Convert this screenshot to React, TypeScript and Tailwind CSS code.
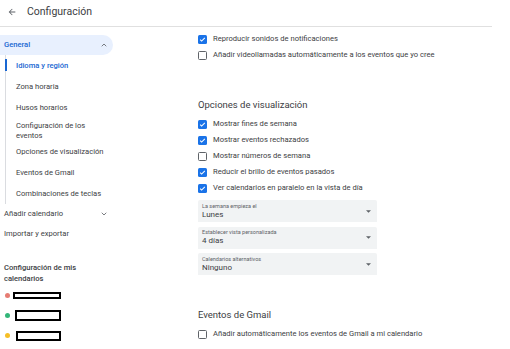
import { ChevronDown, ChevronUp } from "lucide-react";

const navItems = [
  { label: "Zona horaria", h: "h-[21px]" },
  { label: "Husos horarios", h: "h-[20.5px]" },
  { label: "Configuración de los eventos", h: "" },
  { label: "Opciones de visualización", h: "h-[20px]" },
  { label: "Eventos de Gmail", h: "h-[21px]" },
  { label: "Combinaciones de teclas", h: "h-[20.5px]" },
];

function Checkbox({ checked }: { checked: boolean }) {
  if (checked) {
    return (
      <span className="w-[9px] h-[9px] rounded-[1.5px] bg-[#1a73e8] flex items-center justify-center shrink-0">
        <svg width="7" height="7" viewBox="0 0 24 24">
          <path d="M4 12.5l5 5L20 6.5" fill="none" stroke="white" strokeWidth="3.5" />
        </svg>
      </span>
    );
  }
  return <span className="w-[9px] h-[9px] rounded-[1.5px] border-[1.5px] border-[#5f6368] shrink-0" />;
}

function CheckRow({ checked, label }: { checked: boolean; label: string }) {
  return (
    <div className="h-[16px] flex items-center gap-[6px]">
      <Checkbox checked={checked} />
      <span className="text-[7.6px] text-[#3c4043] whitespace-nowrap">{label}</span>
    </div>
  );
}

function SelectBox({ label, value }: { label: string; value: string }) {
  return (
    <div className="w-[179px] h-[22px] bg-[#f1f3f4] rounded-t-[2px] flex items-center justify-between pl-[4px] pr-[6px]">
      <div className="flex flex-col">
        <span className="text-[5.5px] leading-[7px] text-[#5f6368]">{label}</span>
        <span className="text-[8px] leading-[10px] text-[#3c4043]">{value}</span>
      </div>
      <svg width="5" height="3" viewBox="0 0 10 5">
        <path d="M0 0l5 5 5-5z" fill="#5f6368" />
      </svg>
    </div>
  );
}

export default function App() {
  return (
    <div className="w-[510px] h-[349px] overflow-hidden bg-white font-['Roboto',sans-serif] text-[#3c4043]">
      <div className="h-[27px] w-[492px] border-b border-[#e0e0e0] flex items-center pb-[2px]">
        <svg className="ml-[7px]" width="10" height="10" viewBox="0 0 24 24">
          <path d="M20 11H7.8l5.6-5.6L12 4l-8 8 8 8 1.4-1.4L7.8 13H20z" fill="#5f6368" />
        </svg>
        <span className="ml-[10px] text-[10.5px] text-[#3c4043]">Configuración</span>
      </div>

      <div className="flex">
        <aside className="w-[198px] shrink-0 pt-[8px]">
          <div className="w-[113px] h-[20px] bg-[#e8f0fe] rounded-r-full flex items-center justify-between pl-[4px] pr-[5px]">
            <span className="text-[7.6px] font-medium text-[#1967d2]">General</span>
            <ChevronUp size={8} strokeWidth={2.5} color="#5f6368" />
          </div>
          <div className="ml-[5px] border-l border-[#dadce0] w-[108px]">
            <div className="relative h-[21px] flex items-center pl-[10px]">
              <span className="absolute left-[-1.5px] top-[4px] w-[2px] h-[12px] bg-[#1967d2]" />
              <span className="text-[7.6px] font-medium text-[#1967d2]">Idioma y región</span>
            </div>
            {navItems.map((item) =>
              item.label.startsWith("Configuración") ? (
                <div key={item.label} className="pt-[3px] pb-[1.5px] pl-[10px] pr-[20px] text-[7.6px] leading-[10px]">
                  {item.label}
                </div>
              ) : (
                <div key={item.label} className={`${item.h} flex items-center pl-[10px] text-[7.6px]`}>
                  {item.label}
                </div>
              )
            )}
          </div>
          <div className="w-[113px] h-[20px] flex items-center justify-between pl-[4px] pr-[5px] text-[7.6px]">
            <span>Añadir calendario</span>
            <ChevronDown size={8} strokeWidth={2.5} color="#5f6368" />
          </div>
          <div className="h-[20px] flex items-center pl-[4px] text-[7.6px]">Importar y exportar</div>
          <div className="mt-[18px] pl-[4px] w-[90px] text-[7.6px] leading-[11px] font-medium">
            Configuración de mis calendarios
          </div>
          <div className="mt-[2px] flex flex-col">
            <div className="h-[20px] flex items-center">
              <span className="ml-[5px] w-[5px] h-[5px] rounded-full bg-[#e67c73]" />
              <span className="ml-[3px] w-[48px] h-[7px] border-2 border-black" />
            </div>
            <div className="h-[20px] flex items-center">
              <span className="ml-[5px] w-[5px] h-[5px] rounded-full bg-[#33b679]" />
              <span className="ml-[5px] w-[46px] h-[11px] border-2 border-black" />
            </div>
            <div className="h-[20px] flex items-center">
              <span className="ml-[5px] w-[5px] h-[5px] rounded-full bg-[#f6bf26]" />
              <span className="ml-[6px] w-[45px] h-[10px] border-2 border-black" />
            </div>
          </div>
        </aside>

        <main className="pt-[4px]">
          <CheckRow checked label="Reproducir sonidos de notificaciones" />
          <CheckRow checked={false} label="Añadir videollamadas automáticamente a los eventos que yo cree" />

          <h2 className="mt-[35px] h-[14px] leading-[14px] text-[9.5px] text-[#3c4043]">Opciones de visualización</h2>
          <div className="mt-[4px]">
            <CheckRow checked label="Mostrar fines de semana" />
            <CheckRow checked label="Mostrar eventos rechazados" />
            <CheckRow checked={false} label="Mostrar números de semana" />
            <CheckRow checked label="Reducir el brillo de eventos pasados" />
            <CheckRow checked label="Ver calendarios en paralelo en la vista de día" />
          </div>
          <div className="mt-[4px] flex flex-col gap-[4.5px]">
            <SelectBox label="La semana empieza el" value="Lunes" />
            <SelectBox label="Establecer vista personalizada" value="4 días" />
            <SelectBox label="Calendarios alternativos" value="Ninguno" />
          </div>

          <h2 className="mt-[33px] h-[14px] leading-[14px] text-[9.5px] text-[#3c4043]">Eventos de Gmail</h2>
          <div className="mt-[4px]">
            <CheckRow checked={false} label="Añadir automáticamente los eventos de Gmail a mi calendario" />
          </div>
        </main>
      </div>
    </div>
  );
}
